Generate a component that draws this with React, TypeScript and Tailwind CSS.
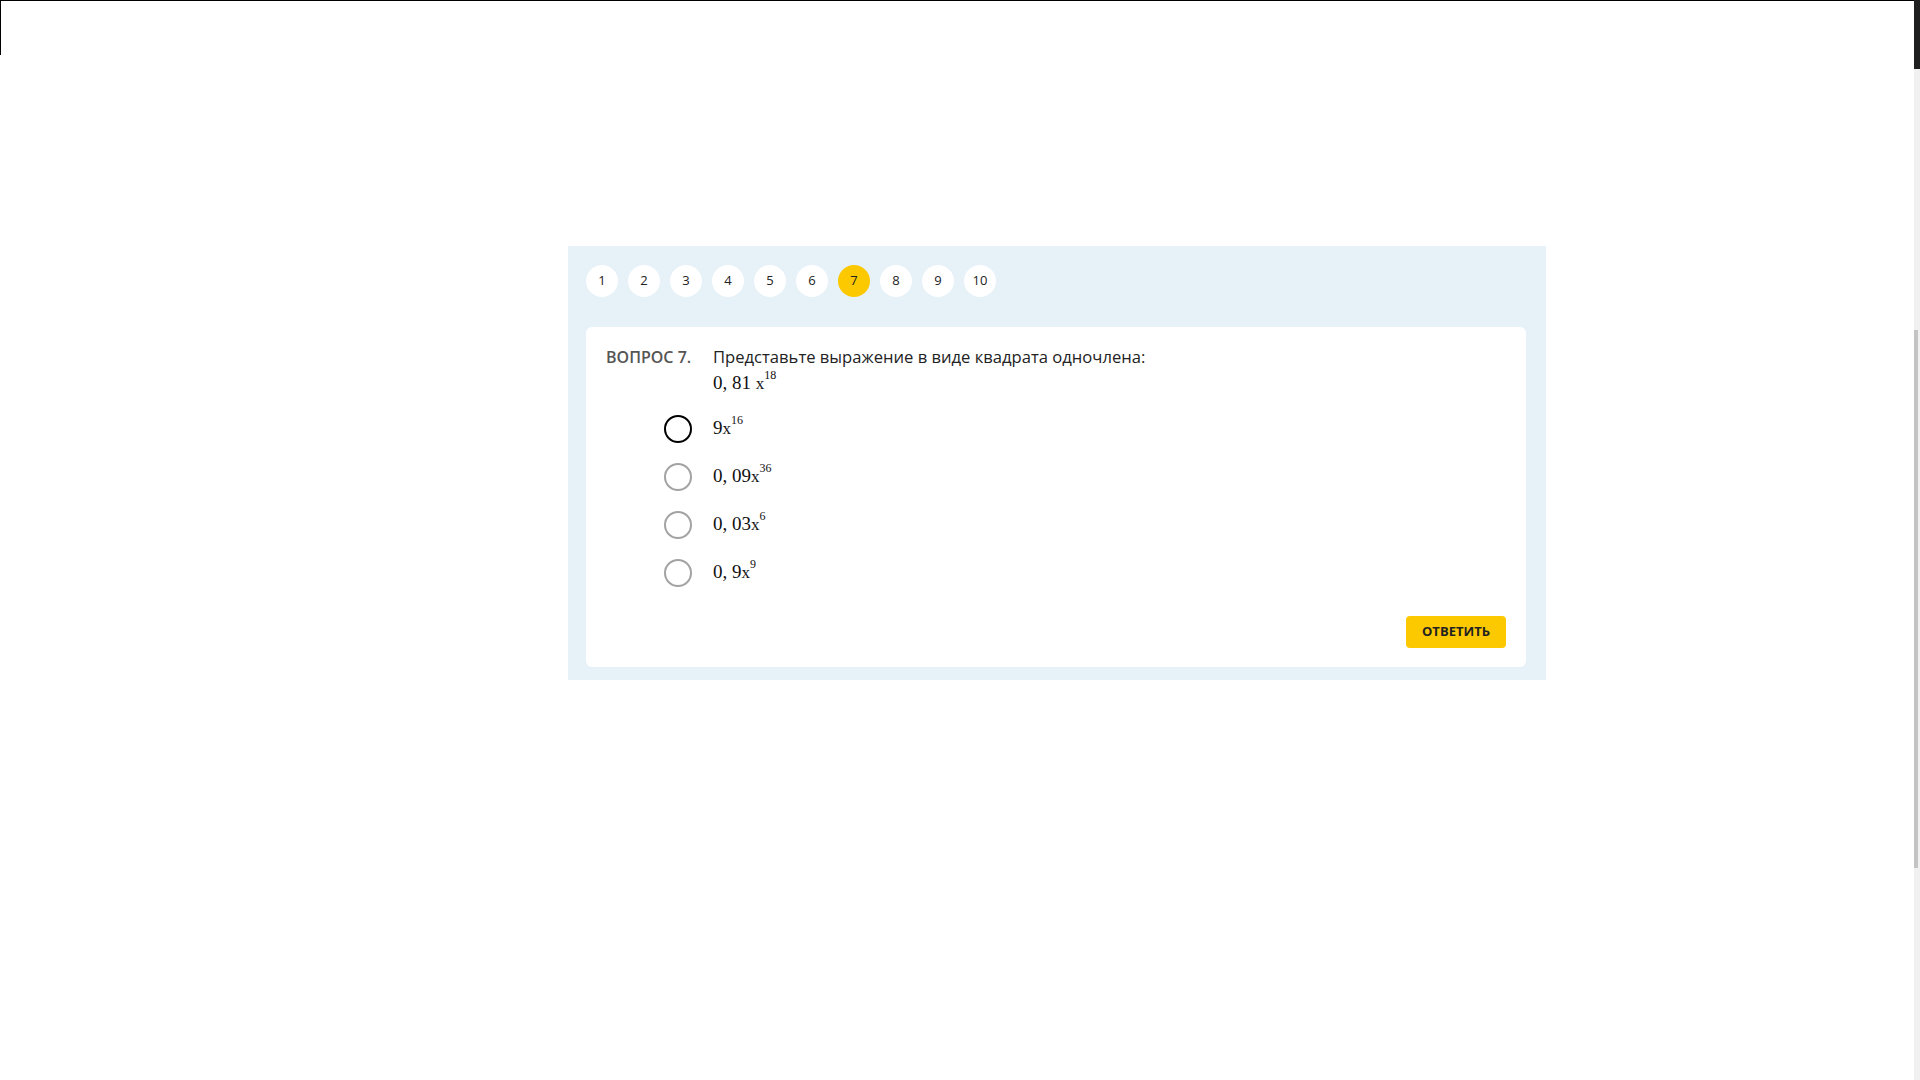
import { useState } from "react";

const options = [
  { base: "9", exp: "16" },
  { base: "0, 09", exp: "36" },
  { base: "0, 03", exp: "6" },
  { base: "0, 9", exp: "9" },
];

function Power({ base, exp, gap }: { base: string; exp: string; gap?: boolean }) {
  return (
    <span className="font-['Liberation_Serif',serif] text-[19px] leading-[26px] text-[#111]">
      {base}
      {gap ? " " : ""}
      <span className="text-[17px]">x</span>
      <span className="relative -top-[10px] text-[12px]">{exp}</span>
    </span>
  );
}

export default function App() {
  const [current, setCurrent] = useState(7);
  const [picked, setPicked] = useState<number | null>(null);

  return (
    <div className="flex min-h-screen bg-white font-['Open_Sans',sans-serif]">
      <div className="flex-1 flex flex-col border-t border-black">
        <div className="h-[54px] border-l border-black" />
        <div className="pl-[568px] pt-[191px]">
          <div className="w-[978px] bg-[#e7f1f8] pl-[18px] pr-[20px] pt-[19px] pb-[13px]">
            <div className="flex gap-[10px]">
              {Array.from({ length: 10 }, (_, i) => i + 1).map((n) => (
                <button
                  key={n}
                  onClick={() => setCurrent(n)}
                  className={
                    n === current
                      ? "w-8 h-8 rounded-full bg-[#fcc800] text-[13px] text-[#222] flex items-center justify-center"
                      : "w-8 h-8 rounded-full bg-white text-[13px] text-[#222] flex items-center justify-center"
                  }
                >
                  {n}
                </button>
              ))}
            </div>

            <div className="mt-[30px] bg-white rounded-md px-5 pt-[18px] pb-[19px]">
              <div className="flex">
                <div className="w-[107px] shrink-0 text-base leading-6 font-semibold text-[#555]">
                  ВОПРОС {current}.
                </div>
                <div>
                  <div className="text-[16.6px] leading-6 text-[#222]">
                    Представьте выражение в виде квадрата одночлена:
                  </div>
                  <div className="pt-[1px]">
                    <Power base="0, 81" exp="18" gap />
                  </div>
                </div>
              </div>

              <div className="mt-[17px] pl-[58px] flex flex-col gap-5">
                {options.map((o, i) => (
                  <label key={i} className="flex items-center gap-[21px] h-7 cursor-pointer">
                    <span
                      onClick={() => setPicked(i)}
                      className={
                        i === 0 || picked === i
                          ? "w-7 h-7 rounded-full border-2 border-black"
                          : "w-7 h-7 rounded-full border-2 border-[#a3a3a3]"
                      }
                    />
                    <Power base={o.base} exp={o.exp} />
                  </label>
                ))}
              </div>

              <div className="mt-[29px] flex justify-end">
                <button className="w-[100px] h-8 rounded bg-[#fcc800] text-[13px] font-bold text-[#222] uppercase">
                  Ответить
                </button>
              </div>
            </div>
          </div>
        </div>
      </div>

      <div className="w-[6px] flex flex-col bg-[#f1f1f1]">
        <div className="h-[69px] bg-[#1f1f1f]" />
        <div className="h-[261px]" />
        <div className="h-[538px] w-[4px] bg-[#c4c4c4]" />
      </div>
    </div>
  );
}
